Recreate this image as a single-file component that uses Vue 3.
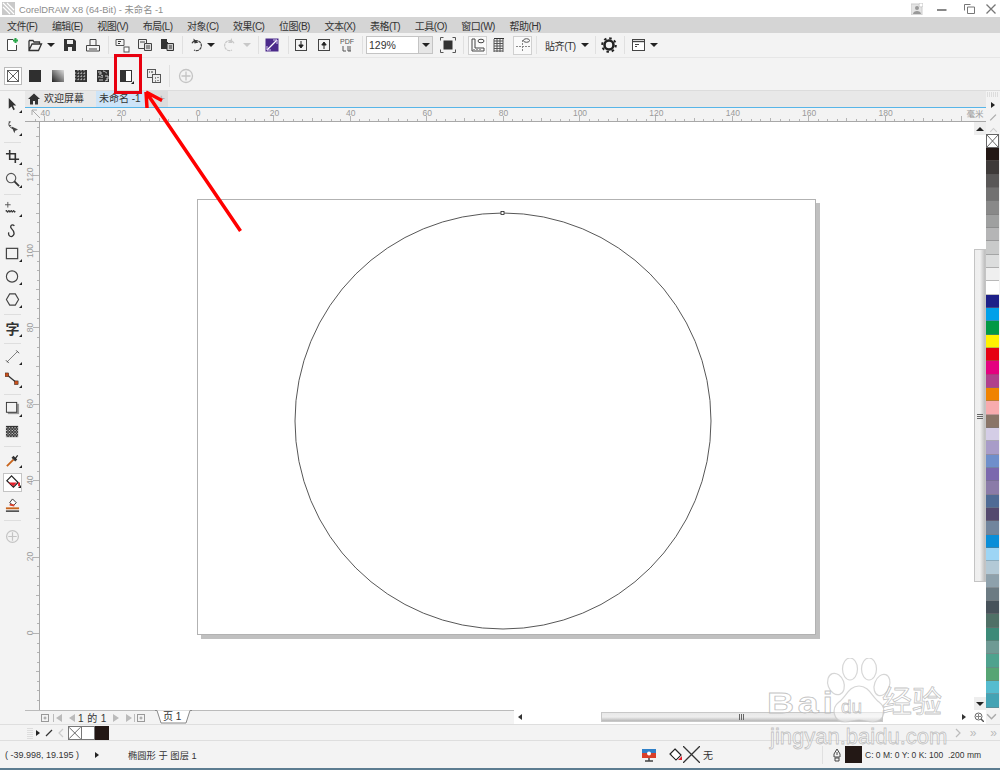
<template>
  <div class="app">
    <!-- title bar -->
    <div class="titlebar">
      <svg class="logo" viewBox="0 0 13 13"><rect width="13" height="13" fill="#c9c9c9" /><path d="M1 1l11 11M5 1l7 7M1 5l7 7" stroke="#fff" stroke-width="1.2" /></svg>
      <span class="title">CorelDRAW X8 (64-Bit) - 未命名 -1</span>
      <div class="winbtns">
        <svg class="user" viewBox="0 0 12 12"><rect width="11" height="11" y="1" fill="#e4e4e4" stroke="#ccc" /><circle cx="6" cy="5" r="2" fill="#999" /><path d="M2 11c0-4 8-4 8 0z" fill="#999" /><circle cx="10" cy="2" r="2" fill="#fff" stroke="#bbb" stroke-width=".6" /></svg>
        <svg class="minb" viewBox="0 0 10 10"><path d="M0 5h9.5" stroke="#888" stroke-width="2" /></svg>
        <svg class="resb" viewBox="0 0 11 10"><path d="M.5 6.5v-6h6M3.500 3h7v6.500h-7z" fill="none" stroke="#777" /></svg>
        <svg class="closeb" viewBox="0 0 10 10"><path d="M.5.500l9 9M9.500.500l-9 9" stroke="#777" stroke-width="1.300" /></svg>
      </div>
    </div>

    <!-- menu -->
    <nav class="menubar">
      <span v-for="m in menus" :key="m">{{ m }}</span>
    </nav>

    <!-- standard toolbar -->
    <div class="toolbar">
      <button class="b"><svg viewBox="0 0 16 16"><path d="M9 2.500H3.500v11h9V8" fill="#fff" stroke="#444" /><path d="M9 3.500h5M11.500 1v5" stroke="#2aa84a" stroke-width="2" /></svg></button>
      <button class="b m1"><svg viewBox="0 0 16 16"><path d="M2 3.500h4l1 1.500h5.500v2M2 3.500v10h9.500L14.500 7H5l-3 6.500" fill="none" stroke="#333" stroke-width="1.300" /></svg></button>
      <i class="ar" />
      <button class="b m3"><svg viewBox="0 0 16 16"><path d="M2 2h10l2 2v10H2z" fill="#333" /><rect x="5" y="3" width="6" height="4" fill="#eee" /><rect x="6" y="10" width="4" height="4" fill="#eee" /></svg></button>
      <button class="b m1"><svg viewBox="0 0 16 16"><path d="M5 8V2.500h6V8M1.500 14V8.500h13V14z" fill="none" stroke="#444" /><path d="M4 12h8" stroke="#444" /></svg></button>
      <i class="sep m4" />
      <button class="b m2"><svg viewBox="0 0 16 16"><path d="M2 2.500h8v6H2z" fill="none" stroke="#555" /><path d="M4 4.500h3M4 6.500h2" stroke="#333" /><rect x="10" y="10" width="5" height="5" fill="#fff" stroke="#555" /></svg></button>
      <button class="b m1"><svg viewBox="0 0 16 16"><path d="M1.500 2.500h8v9h-8z" fill="#eee" stroke="#444" /><path d="M7.500 6.500h7v7h-7z" fill="#ddd" stroke="#444" /><path d="M3 5h5M9 9h4M9 11h4" stroke="#444" /></svg></button>
      <button class="b"><svg viewBox="0 0 16 16"><path d="M2 2h6v3h1v7H2z" fill="#333" /><path d="M8 6.500h6.500v7H8z" fill="#ccc" stroke="#333" /><path d="M10 9h3M10 11h3" stroke="#333" /></svg></button>
      <i class="sep m4" />
      <button class="b m2"><svg viewBox="0 0 16 16"><path d="M4 6.200A5 5 0 1 1 6 13" fill="none" stroke="#444" stroke-width="1.200" stroke-dasharray="3 .6" /><path d="M6 1v5h4z" fill="#333" transform="rotate(-15 8 4)" /></svg></button>
      <i class="ar n1" />
      <button class="b m3 dim"><svg viewBox="0 0 16 16"><path d="M12 6.200A5 5 0 1 0 10 13" fill="none" stroke="#c8c8c8" stroke-width="1.200" stroke-dasharray="3 .6" /><path d="M10 1v5H6z" fill="#c8c8c8" /></svg></button>
      <i class="ar m1 light" />
      <i class="sep m6" />
      <button class="b m2"><svg viewBox="0 0 16 16"><rect x="1.500" y="1.500" width="13" height="13" fill="#4b2a8a" /><path d="M3 13L13 3" stroke="#fff" stroke-width="1.200" /><path d="M9 3h4v4M7 13H3V9" fill="none" stroke="#d9c7f2" /></svg></button>
      <i class="sep m5" />
      <button class="b m1"><svg viewBox="0 0 16 16"><rect x="2.500" y="2.500" width="11" height="11" fill="none" stroke="#444" /><path d="M8 4v6M5.800 8L8 11l2.200-3z" stroke="#222" fill="#222" /></svg></button>
      <button class="b m1"><svg viewBox="0 0 16 16"><rect x="2.500" y="2.500" width="11" height="11" fill="none" stroke="#444" /><path d="M8 12V6M5.800 8L8 5l2.200 3z" stroke="#222" fill="#222" /></svg></button>
      <button class="b m1 pdf"><span>PDF</span><svg viewBox="0 0 12 7"><path d="M2 1v5h3M7 1v5M9 1v5M7 6h3" fill="none" stroke="#555" /></svg></button>
      <i class="sep m4" />
      <div class="combo m3"><span class="combo-val">129%</span><span class="combo-btn"><i class="ar-in" /></span></div>
      <button class="b m4"><svg viewBox="0 0 16 16"><rect x="3.500" y="3.500" width="9" height="9" fill="#333" /><path d="M.5 3.500v-3h3M12.500.5h3v3M15.500 12.500v3h-3M3.500 15.500h-3v-3" fill="none" stroke="#555" /></svg></button>
      <i class="sep m4" />
      <button class="b m4 boxed"><svg viewBox="0 0 16 16"><path d="M2 2v12h12v-3H5V2z" fill="none" stroke="#444" /><path d="M4 13v-1M7 13v-1M10 13v-1" stroke="#444" /><ellipse cx="11" cy="4" rx="3" ry="1.800" fill="none" stroke="#444" /></svg></button>
      <button class="b m1"><svg viewBox="0 0 16 16"><path d="M3 2v13M6 2v13M9 2v13M12 2v13M3 4h9M3 6.500h9M3 9h9M3 11.500h9M3 14h9" stroke="#555" /><path d="M3 1.500h10" stroke="#333" /></svg></button>
      <button class="b m3 boxed"><svg viewBox="0 0 16 16"><path d="M7.500 3v12M1 9.500h14" stroke="#888" stroke-dasharray="2 1" /><ellipse cx="11.500" cy="3.500" rx="3" ry="1.800" fill="none" stroke="#555" /></svg></button>
      <i class="sep m4" />
      <span class="snap">貼齐(T)</span>
      <i class="ar m3" />
      <i class="sep m5" />
      <button class="b m2"><svg viewBox="0 0 16 16"><circle cx="8" cy="8" r="4.500" fill="none" stroke="#222" stroke-width="2.600" /><circle cx="8" cy="8" r="6.800" fill="none" stroke="#222" stroke-width="2" stroke-dasharray="2.500 2.840" /></svg></button>
      <i class="sep m4" />
      <button class="b m3"><svg viewBox="0 0 16 16"><rect x="1.500" y="2.500" width="12" height="11" fill="#fff" stroke="#444" /><path d="M1.500 4.500h12" stroke="#444" stroke-width="1.400" /><path d="M4 7.500h4M4 9.500h2" stroke="#444" /></svg></button>
      <i class="ar n1" />
    </div>

    <!-- fill property bar -->
    <div class="propbar">
      <button class="fillbox"><svg viewBox="0 0 13 13"><rect x=".5" y=".5" width="12" height="12" fill="#fff" stroke="#555" /><path d="M.5.500l12 12M12.500.500l-12 12" stroke="#555" /></svg></button>
      <button class="b p1"><svg viewBox="0 0 16 16"><rect x="2" y="2" width="12" height="12" fill="#2f2f2f" /></svg></button>
      <button class="b p2"><svg viewBox="0 0 16 16"><defs><linearGradient id="grad" x1="0" y1="1" x2="1" y2="0"><stop offset="0" stop-color="#222" /><stop offset="1" stop-color="#ddd" /></linearGradient></defs><rect x="2" y="2" width="12" height="12" fill="url(#grad)" /></svg></button>
      <button class="b p2"><svg viewBox="0 0 16 16"><rect x="2" y="2" width="12" height="12" fill="#333" /><path d="M2 5h12M2 8h12M2 11h12M5 2v12M8 2v12M11 2v12" stroke="#ddd" stroke-width=".9" stroke-dasharray="1.200 1.800" /></svg></button>
      <button class="b"><svg viewBox="0 0 16 16"><rect x="2" y="2" width="12" height="12" fill="#333" /><path d="M3 4h3v2H4M8 3c2 0 3 2 4 2M3 9c2-1 3 1 5 0M10 8h3v3h-2M4 12h4M10 13l3-1M6 7l2 1" fill="none" stroke="#ccc" /></svg></button>
      <button class="b p2 half"><svg viewBox="0 0 16 16"><rect x="2.500" y="2.500" width="11" height="11" fill="#fff" stroke="#333" /><rect x="2" y="2" width="6" height="12" fill="#333" /><path d="M16 13v3h-3z" fill="#222" /></svg></button>
      <button class="b p3"><svg viewBox="0 0 16 16"><rect x="1.500" y="1.500" width="8" height="8" fill="#eee" stroke="#555" /><rect x="6.500" y="6.500" width="8" height="8" fill="#eee" stroke="#555" /><path d="M3 4h1M6 3v2M9 10h1M12 9v1M9 13h1M12 12v1" stroke="#333" /></svg></button>
      <i class="sep tall p4" />
      <button class="b p5"><svg viewBox="0 0 16 16"><circle cx="8" cy="8" r="6.500" fill="none" stroke="#c4c4c4" stroke-width="1.300" /><path d="M8 3.500v9M3.500 8h9" stroke="#c4c4c4" stroke-width="1.300" /></svg></button>
    </div>

    <!-- main area -->
    <div class="work">
      <aside class="toolbox">
        <button class="t"><svg viewBox="0 0 16 16"><path d="M4 1l8 8H8.500l2 4-1.500 1-2-4L4 12.500z" fill="#333" /></svg><i class="fly" /></button>
        <button class="t"><svg viewBox="0 0 16 16"><path d="M5 2c-2 3 0 5 1 6l6 3" fill="none" stroke="#333" /><path d="M4 2h2M4.500 6h2" stroke="#333" /><path d="M7 7l3 7 1-3 3-1z" fill="#444" /></svg><i class="fly" /></button>
        <hr class="ts" />
        <button class="t"><svg viewBox="0 0 16 16"><path d="M5 1v10h10M1 5h10v10" fill="none" stroke="#333" stroke-width="1.700" /></svg><i class="fly" /></button>
        <button class="t"><svg viewBox="0 0 16 16"><circle cx="6.500" cy="6.500" r="5" fill="none" stroke="#555" stroke-width="1.200" /><path d="M10 10l5 5" stroke="#333" stroke-width="2" /></svg><i class="fly" /></button>
        <hr class="ts" />
        <button class="t"><svg viewBox="0 0 16 16"><path d="M3 1v6M0 4h6" stroke="#555" /><path d="M1 11c1-3 1 3 2.500 0s1 3 2.500 0 1 3 2.500 0 1 3 2.500 0" fill="none" stroke="#333" stroke-width="1.200" /></svg><i class="fly" /></button>
        <button class="t"><svg viewBox="0 0 16 16"><path d="M10 3c-3-3-5 1-3 3s4 4 2 7-6 1-5-3" fill="none" stroke="#333" stroke-width="1.400" /></svg></button>
        <button class="t"><svg viewBox="0 0 16 16"><rect x="1.500" y="2.500" width="12" height="11" fill="none" stroke="#444" stroke-width="1.300" /></svg><i class="fly" /></button>
        <button class="t"><svg viewBox="0 0 16 16"><circle cx="7.500" cy="8" r="6" fill="none" stroke="#444" stroke-width="1.200" /></svg><i class="fly" /></button>
        <button class="t"><svg viewBox="0 0 16 16"><path d="M5 2h6l3.500 6L11 14H5L1.500 8z" fill="none" stroke="#444" stroke-width="1.200" /></svg><i class="fly" /></button>
        <hr class="ts" />
        <button class="t zi">字<i class="fly" /></button>
        <hr class="ts" />
        <button class="t"><svg viewBox="0 0 16 16"><path d="M2 14L13 3" stroke="#777" /><path d="M1 12l3 3M12 1.500l3 3" stroke="#444" /></svg><i class="fly" /></button>
        <button class="t"><svg viewBox="0 0 16 16"><path d="M2 3l11 9" stroke="#333" stroke-width="1.400" /><rect x="0" y="1" width="4" height="4" fill="#c8501c" stroke="#222" stroke-width=".5" /><rect x="10" y="9.500" width="4" height="4" fill="#c8501c" stroke="#222" stroke-width=".5" /></svg><i class="fly" /></button>
        <hr class="ts" />
        <button class="t"><svg viewBox="0 0 16 16"><rect x="3" y="3" width="12" height="11" fill="#999" /><rect x="1.500" y="1.500" width="11" height="10.500" fill="#f3f3f3" stroke="#333" /></svg><i class="fly" /></button>
        <button class="t"><svg viewBox="0 0 16 16"><rect x="1" y="2" width="13" height="12" fill="#333" /><path d="M1 4h13M1 7h13M1 10h13M1 13h13" stroke="#ddd" stroke-dasharray="1.500 1.500" /><path d="M2.500 5.500h12M2.500 8.500h12M2.500 11.500h12" stroke="#bbb" stroke-dasharray="1.500 1.500" /></svg></button>
        <hr class="ts" />
        <button class="t"><svg viewBox="0 0 16 16"><path d="M2 14l7-7" stroke="#c8641c" stroke-width="2" /><path d="M8 4l4 4" stroke="#333" stroke-width="3" /><path d="M10 6l3-4 1 1-3 4z" fill="#222" /></svg><i class="fly" /></button>
        <button class="t on"><svg viewBox="0 0 16 16"><path d="M7 1l7 7-5 5-7-7z" fill="#fff" stroke="#222" stroke-width="1.300" /><path d="M3.500 8h9L9 12z" fill="#e4202c" /><path d="M15 8v4" stroke="#e4202c" stroke-width="2" /></svg><i class="fly" /></button>
        <button class="t"><svg viewBox="0 0 16 16"><path d="M8 1l4 4-3 3-4-3z" fill="#fff" stroke="#333" /><path d="M5 7l5 1" stroke="#d8402a" stroke-width="2" /><path d="M1 10h14v2H1z" fill="#c8641c" /><path d="M1 14h14" stroke="#333" stroke-width="1.500" /></svg></button>
        <hr class="ts" />
        <button class="t last"><svg viewBox="0 0 16 16"><circle cx="8" cy="8" r="6.300" fill="none" stroke="#c4c4c4" stroke-width="1.300" /><path d="M8 3.500v9M3.500 8h9" stroke="#c4c4c4" stroke-width="1.300" /></svg></button>
      </aside>

      <div class="center">
        <div class="tabs">
          <svg class="home" viewBox="0 0 12 12"><path d="M6 .5L0 6h2v5.500h3V8h2v3.500h3V6h2z" fill="#333" /></svg>
          <span class="tab">欢迎屏幕</span>
          <span class="tab active">未命名 -1</span>
          <span class="tab-add">+</span>
        </div>

        <div class="hruler">
          <svg width="961" height="13">
            <path d="M7 2l8 8M7 2v5M7 2h5" fill="none" stroke="#aaa" />
            <path v-for="t in hTicks" :key="t.x" :d="`M${t.x} 13v-${t.h}`" stroke="#b4b4b4" />
            <text v-for="l in hLabels" :key="l.x" :x="l.x" y="8" class="rtxt" text-anchor="middle">{{ l.n }}</text>
            <text x="950" y="9" class="rtxt" text-anchor="middle">毫米</text>
          </svg>
        </div>

        <div class="body">
          <div class="vruler">
            <svg width="14" height="588">
              <path v-for="t in vTicks" :key="t.y" :d="`M14 ${t.y}h-${t.h}`" stroke="#b4b4b4" />
              <text v-for="l in vLabels" :key="l.y" class="rtxt" text-anchor="middle" :transform="`translate(8 ${l.y}) rotate(-90)`">{{ l.n }}</text>
            </svg>
          </div>
          <div class="canvas">
            <!-- the drawing page, placed on the free canvas -->
            <div class="page">
              <svg class="shape" width="420" height="420" viewBox="0 0 420 420">
                <circle cx="210" cy="210" r="208" fill="none" stroke="#444" stroke-width=".9" />
                <rect x="208" y="0.500" width="3" height="3" fill="#fff" stroke="#222" stroke-width=".8" />
              </svg>
            </div>
            <div class="vscroll">
              <div class="sb-btn up"><i class="tri-up" /></div>
              <div class="sb-track">
                <div class="sb-thumb"><span class="grip" /></div>
              </div>
              <div class="sb-btn down"><i class="ar-in" /></div>
            </div>
          </div>
        </div>

        <div class="pagebar">
          <div class="pagenav">
            <svg class="pg first" viewBox="0 0 10 10"><rect x="1.500" y="1.500" width="7" height="7" fill="none" stroke="#999" /><path d="M3.500 5h3M5 3.500v3" stroke="#999" /></svg>
            <i class="nav-l bar" />
            <i class="nav-l" />
            <span class="count">1 的 1</span>
            <i class="nav-r" />
            <i class="nav-r bar" />
            <svg class="pg" viewBox="0 0 10 10"><rect x="1.500" y="1.500" width="7" height="7" fill="none" stroke="#999" /><path d="M3.500 5h3M5 3.500v3" stroke="#999" /></svg>
            <div class="pagetab">
              <svg width="37" height="14" viewBox="0 0 37 14"><path d="M0 .5h2l4 12.500h25l4-12.500h2" fill="#fff" stroke="#888" /></svg>
              <span>页 1</span>
            </div>
          </div>
          <div class="hscroll">
            <i class="nav-l dark" />
            <div class="hthumb"><span class="grip h" /></div>
            <i class="nav-r dark" />
            <svg class="zoomfit" viewBox="0 0 10 10"><circle cx="4.500" cy="4.500" r="3.500" fill="#fff" stroke="#666" /><path d="M7 7l3 3" stroke="#555" stroke-width="1.400" /><path d="M4.500 2v5M2 4.500h5" stroke="#888" /></svg>
          </div>
        </div>
      </div>

      <aside class="palette">
        <div class="pal-head">
          <span class="pal-grip" />
          <i class="tri-r" />
          <svg viewBox="0 0 10 10"><path d="M1 9l7-7" stroke="#aaa" stroke-width="1.500" /></svg>
          <svg viewBox="0 0 10 10"><path d="M1 7l4-4 4 4" fill="none" stroke="#ccc" stroke-width="1.300" /></svg>
        </div>
        <div class="swatch none"><svg viewBox="0 0 13 13" preserveAspectRatio="none"><path d="M0 0l13 13M13 0L0 13" stroke="#555" /></svg></div>
        <div v-for="c in palette" :key="c" class="swatch" :style="{ background: c }" />
        <svg class="pal-down" viewBox="0 0 10 10"><path d="M1 3l4 4 4-4" fill="none" stroke="#aaa" stroke-width="1.300" /></svg>
      </aside>
    </div>

    <!-- document palette -->
    <div class="docpal">
      <span class="dp-grip" />
      <i class="tri-r" />
      <svg class="dp-pen" viewBox="0 0 8 8"><path d="M1 7l6-6" stroke="#333" stroke-width="1.300" /></svg>
      <svg class="dp-lt" viewBox="0 0 8 10"><path d="M6 1L2 5l4 4" fill="none" stroke="#ccc" stroke-width="1.200" /></svg>
      <div class="dp-sw x"><svg viewBox="0 0 13 13"><path d="M0 0l13 13M13 0L0 13" stroke="#555" /></svg></div>
      <div class="dp-sw w" />
      <div class="dp-sw k" />
      <svg class="dp-more" viewBox="0 0 8 10"><path d="M2 1l4 4-4 4" fill="none" stroke="#bbb" stroke-width="1.200" /></svg>
      <span class="dp-dbl">»</span>
      <span class="dp-dbl last">»</span>
    </div>

    <!-- status bar -->
    <footer class="status">
      <span class="coords">( -39.998, 19.195 )</span>
      <i class="tri-r st" />
      <span class="obj">椭圆形 于 图层 1</span>
      <svg class="mon" viewBox="0 0 14 14"><rect y="1" width="14" height="9" fill="#2f80c8" /><rect y="5" width="14" height="5" fill="#d8402a" /><circle cx="7" cy="5.500" r="2" fill="#fff" /><path d="M3 13h8M7 10v3" stroke="#444" stroke-width="1.500" /></svg>
      <svg class="fillst" viewBox="0 0 14 14"><path d="M6 1l6 6-5 5-6-6z" fill="#fff" stroke="#222" stroke-width="1.200" /><path d="M3 7h8l-4 4z" fill="#fff" /><path d="M13 8v4H9z" fill="#e4202c" /></svg>
      <div class="xbox"><svg viewBox="0 0 17 17"><path d="M0 0l17 17M17 0L0 17" stroke="#333" stroke-width="1.300" /></svg></div>
      <span class="none-txt">无</span>
      <i class="sep st-sep" />
      <svg class="nib" viewBox="0 0 8 14"><path d="M4 1L1 6v3h6V6zM2 10h4v3H2z" fill="none" stroke="#444" /><path d="M4 4v3" stroke="#444" /></svg>
      <div class="outline" />
      <span class="cmyk">C: 0 M: 0 Y: 0 K: 100&nbsp; .200 mm</span>
    </footer>
    <div class="strip" />

    <!-- red annotation drawn over the screenshot -->
    <svg class="note" width="1000" height="770">
      <rect x="115.500" y="55.500" width="25" height="37" fill="none" stroke="#e8000f" stroke-width="3" />
      <path d="M240.500 231L146 92M146 92l16 8.500M146 92l1 16" fill="none" stroke="#f00" stroke-width="3.500" />
    </svg>

    <!-- watermark -->
    <div class="mark">
      <svg class="paw" width="76" height="76" viewBox="0 0 76 76">
        <g fill="none" stroke="#c8c8c8" stroke-opacity=".75" stroke-width="1.200">
          <ellipse cx="17" cy="26" rx="8" ry="11" transform="rotate(-20 17 26)" />
          <ellipse cx="31" cy="11" rx="7.500" ry="11" />
          <ellipse cx="50" cy="11" rx="7.500" ry="11" />
          <ellipse cx="63" cy="27" rx="7.500" ry="11" transform="rotate(20 63 27)" />
          <path d="M40 28c10 0 13 11 20 16 8 6 6 20-6 20-6 0-9-2-14-2s-8 2-14 2c-12 0-14-14-6-20 7-5 10-16 20-16z" fill="#fff" fill-opacity=".5" />
        </g>
      </svg>
      <span class="bai">Bai</span>
      <span class="du">du</span>
      <span class="jy">经验</span>
      <span class="url">jingyan.baidu.com</span>
    </div>
  </div>
</template>

<script setup>
const menus = ['文件(F)', '编辑(E)', '视图(V)', '布局(L)', '对象(C)', '效果(C)', '位图(B)', '文本(X)', '表格(T)', '工具(O)', '窗口(W)', '帮助(H)']

const palette = [
  '#231815', '#3e3a39', '#595757', '#727171', '#898989', '#9fa0a0', '#b5b5b6', '#c9caca', '#dcdddd', '#efefef', '#ffffff',
  '#1d2088', '#00a0e9', '#009944', '#fff100', '#e60012', '#e4007f', '#b0408c', '#f08300', '#f7abae', '#8a7568',
  '#d4cde6', '#a89cc8', '#6f8fcb', '#7b68ae', '#8a7ba8', '#4f6b95', '#54496e', '#71859d', '#0a8ed8', '#9dd5f5',
  '#b3c9d6', '#8ea1ac', '#6c7b83', '#47525a', '#4f7066', '#3d8a78', '#6f9a94', '#4fa28e', '#57a574', '#55bccf', '#44a3b4',
]

// 20 units are 76.4px on screen, with eight small divisions in between
const unit = 76.4
const step = unit / 8

const hZero = 172
const hTicks = []
for (let i = -18; i < 100; i++) {
  const x = Math.round(hZero + i * step) + 0.5
  if (x < 8 || x > 945) continue
  hTicks.push({ x, h: i % 8 === 0 ? 5 : i % 4 === 0 ? 3 : 2 })
}
const hLabels = [-40, -20, 0, 20, 40, 60, 80, 100, 120, 140, 160, 180].map((n) => ({
  n: Math.abs(n),
  x: hZero + 1 + (n / 20) * unit,
}))

// vertical ruler: 0 sits 511px below the top of the canvas
const vZero = 511
const vTicks = []
for (let i = -56; i < 10; i++) {
  const y = Math.round(vZero + i * step) + 0.5
  if (y < 2 || y > 587) continue
  vTicks.push({ y, h: i % 8 === 0 ? 6 : i % 4 === 0 ? 3 : 2 })
}
const vLabels = [120, 100, 80, 60, 40, 20, 0].map((n) => ({
  n,
  y: vZero - (n / 20) * unit,
}))
</script>

<style>
html, body { margin: 0; background: #fff; }
</style>

<style scoped>
.app {
  position: relative;
  width: 1000px;
  height: 770px;
  overflow: hidden;
  display: flex;
  flex-direction: column;
  font-family: "Liberation Sans", "Noto Sans CJK SC", sans-serif;
  font-size: 10px;
  color: #333;
  background: #f3f3f3;
}
button {
  padding: 0;
  border: 0;
  background: none;
  font: inherit;
  color: inherit;
}
svg { display: block; }

.titlebar {
  height: 17px;
  flex: none;
  background: #fff;
  display: flex;
  align-items: center;
  padding-left: 2px;
}
.logo { width: 13px; height: 13px; }
.title { margin-left: 4px; font-size: 9.300px; color: #8c8c8c; white-space: nowrap; }
.winbtns { margin-left: auto; display: flex; align-items: center; }
.user { width: 12px; height: 12px; }
.minb { width: 10px; height: 10px; margin-left: 14px; margin-top: 2px; }
.resb { width: 11px; height: 10px; margin-left: 17px; }
.closeb { width: 10px; height: 10px; margin-left: 11px; margin-right: 4px; }

.menubar {
  height: 16px;
  flex: none;
  background: #d5d5d5;
  display: flex;
  align-items: center;
  gap: 14.600px;
  padding-left: 7px;
  color: #333;
  white-space: nowrap;
  letter-spacing: -.5px;
}

.toolbar {
  height: 25px;
  flex: none;
  box-sizing: border-box;
  display: flex;
  align-items: center;
  padding-left: 1px;
  border-bottom: 1px solid #e6e6e6;
  background: #f3f3f3;
}
.b {
  width: 22px;
  height: 20px;
  flex: none;
  display: flex;
  align-items: center;
  justify-content: center;
  box-sizing: border-box;
}
.b svg { width: 16px; height: 16px; }
.ar {
  width: 10px;
  flex: none;
  display: block;
  height: 0;
  position: relative;
}
.ar::after {
  content: "";
  position: absolute;
  left: 1px;
  top: -2px;
  border-left: 4px solid transparent;
  border-right: 4px solid transparent;
  border-top: 4px solid #222;
}
.ar.light::after { border-top-color: #c8c8c8; }
.ar-in {
  display: block;
  border-left: 4px solid transparent;
  border-right: 4px solid transparent;
  border-top: 4px solid #222;
}
.sep { width: 1px; height: 18px; flex: none; background: #e0e0e0; display: block; }
.m1 { margin-left: 1px; }
.m2 { margin-left: 2px; }
.m3 { margin-left: 3px; }
.m4 { margin-left: 4px; }
.m5 { margin-left: 5px; }
.m6 { margin-left: 6px; }
.n1 { margin-left: -1px; }
.boxed { width: 19px; border: 1px solid #d0d0d0; background: #fafafa; height: 19px; }
.pdf { flex-direction: column; line-height: 7px; font-size: 7px; color: #555; }
.pdf svg { width: 12px; height: 7px; }
.combo {
  width: 67px;
  height: 18px;
  flex: none;
  display: flex;
  box-sizing: border-box;
  border: 1px solid #c4c4c4;
  background: #fff;
}
.combo-val { flex: 1; padding-left: 2px; line-height: 16px; font-size: 10.500px; color: #333; }
.combo-btn {
  width: 13px;
  display: flex;
  align-items: center;
  justify-content: center;
  background: #e6e6e6;
  border-left: 1px solid #c4c4c4;
}
.snap { margin-left: 8px; width: 32px; flex: none; white-space: nowrap; letter-spacing: -.4px; }

.propbar {
  height: 33px;
  flex: none;
  display: flex;
  align-items: center;
  padding: 3px 0 0 4px;
  box-sizing: border-box;
  border-bottom: 1px solid #dcdcdc;
  background: #f3f3f3;
}
.fillbox {
  width: 18px;
  height: 18px;
  flex: none;
  padding: 2px;
  box-sizing: border-box;
  border: 1px solid #bbb;
  background: #fff;
}
.p1 { margin-left: 2px; }
.p2 { margin-left: 1px; }
.p3 { margin-left: 6px; }
.p4 { margin-left: 4px; height: 22px; }
.p5 { margin-left: 5px; }
.half { position: relative; }

.work {
  flex: 1;
  min-height: 0;
  display: flex;
}
.toolbox {
  width: 25px;
  flex: none;
  display: flex;
  flex-direction: column;
  align-items: center;
  padding-top: 2.600px;
  box-sizing: border-box;
}
.t {
  position: relative;
  width: 19px;
  height: 22.800px;
  flex: none;
  display: flex;
  align-items: center;
  justify-content: center;
  box-sizing: border-box;
}
.t svg { width: 15px; height: 15px; }
.fly {
  position: absolute;
  right: 0;
  bottom: 3px;
  border-left: 3px solid transparent;
  border-bottom: 3px solid #222;
}
.t.on { border: 1px solid #c4c4c4; background: #fff; height: 19px; margin: 2px 0 1.800px; }
.t.last { margin-top: 2px; }
.zi { font-size: 14px; font-weight: 700; color: #333; }
.ts {
  width: 17px;
  height: 1px;
  flex: none;
  margin: 3.200px 0 1.800px;
  border: 0;
  background: #dedede;
}

.center {
  flex: 1;
  min-width: 0;
  display: flex;
  flex-direction: column;
}
.tabs {
  height: 17px;
  flex: none;
  box-sizing: border-box;
  display: flex;
  align-items: center;
  background: #e8e8e8;
  border-bottom: 1px solid #57b5e8;
}
.home { width: 12px; height: 12px; margin-left: 3px; }
.tab { margin-left: 3px; padding-left: 1px; line-height: 16px; width: 51px; box-sizing: border-box; flex: none; white-space: nowrap; }
.tab.active { margin-left: 2px; background: #cde4f8; padding-left: 3px; width: 49px; }
.tab-add { width: 23px; line-height: 16px; background: #dcdcdc; text-align: right; padding-right: 3px; box-sizing: border-box; color: #aaa; font-size: 13px; }

.hruler {
  height: 14px;
  flex: none;
  box-sizing: border-box;
  border-bottom: 1px solid #a8a8a8;
  background: #f3f3f3;
}
.rtxt { font-size: 8.500px; fill: #9a9a9a; font-family: "Liberation Sans", "Noto Sans CJK SC", sans-serif; }

.body { flex: 1; min-height: 0; display: flex; }
.vruler {
  width: 14px;
  flex: none;
  box-sizing: content-box;
  border-right: 1px solid #a8a8a8;
  background: #f3f3f3;
}
.canvas {
  position: relative;
  flex: 1;
  min-width: 0;
  background: #fff;
  display: flex;
  justify-content: flex-end;
}
.page {
  position: absolute;
  left: 157px;
  top: 77px;
  width: 617px;
  height: 434px;
  border: 1px solid #b2b2b2;
  background: #fff;
  box-shadow: 4px 4px 0 #c0c0c0;
}
.shape { position: absolute; left: 95px; top: 11px; }
.vscroll {
  position: relative;
  width: 12px;
  display: flex;
  flex-direction: column;
}
.sb-btn {
  height: 13px;
  flex: none;
  display: flex;
  align-items: center;
  justify-content: center;
  background: #eee;
}
.tri-up {
  display: block;
  border-left: 4px solid transparent;
  border-right: 4px solid transparent;
  border-bottom: 4px solid #222;
}
.sb-track { flex: 1; padding-top: 114px; }
.sb-thumb {
  height: 333px;
  box-sizing: border-box;
  border: 1px solid #c4c4c4;
  background: linear-gradient(90deg, #eeeeee, #f0f0f0 50%, #bdbdbd);
  display: flex;
  align-items: center;
  justify-content: center;
}
.grip {
  width: 6px;
  height: 6px;
  background: repeating-linear-gradient(0deg, #666 0 1px, transparent 1px 2px);
}
.grip.h {
  background: repeating-linear-gradient(90deg, #666 0 1px, transparent 1px 2px);
}

.pagebar {
  height: 14px;
  flex: none;
  display: flex;
  background: #fff;
}
.pagenav {
  width: 489px;
  flex: none;
  display: flex;
  align-items: center;
  background: #f3f3f3;
  border-top: 1px solid #bbb;
  box-sizing: border-box;
  padding-left: 15px;
}
.pg { width: 10px; height: 10px; flex: none; }
.first { margin-right: 6px; }
.nav-l, .nav-r {
  display: block;
  flex: none;
  width: 0;
  height: 0;
  border-top: 4px solid transparent;
  border-bottom: 4px solid transparent;
}
.nav-l { border-right: 6px solid #bbb; margin-right: 3px; }
.nav-l.bar { margin-right: 7px; }
.nav-r { border-left: 6px solid #bbb; margin-right: 7px; }
.nav-l.bar { box-shadow: -2px 0 0 0 #f3f3f3, -3px 0 0 0 #bbb; }
.nav-r.bar { box-shadow: 2px 0 0 0 #f3f3f3, 3px 0 0 0 #bbb; margin-right: 4px; }
.count { width: 35px; flex: none; letter-spacing: .4px; color: #333; white-space: nowrap; }
.pagetab { position: relative; margin-left: 9px; width: 37px; flex: none; height: 14px; margin-top: -1px; }
.pagetab span { position: absolute; left: 8px; top: 0; line-height: 13px; white-space: nowrap; }
.hscroll {
  flex: 1;
  min-width: 0;
  display: flex;
  align-items: center;
  padding-left: 4px;
  position: relative;
  background: #fff;
}
.nav-l.dark { border-right-color: #333; border-top-width: 3px; border-bottom-width: 3px; border-right-width: 4px; margin-right: 0; }
.nav-r.dark { border-left-color: #333; border-top-width: 3px; border-bottom-width: 3px; border-left-width: 4px; margin: 0 0 0 auto; }
.hthumb {
  margin-left: 79px;
  width: 282px;
  height: 10px;
  background: linear-gradient(180deg, #e8e8e8, #eee 50%, #b8b8b8);
  border: 1px solid #c8c8c8;
  display: flex;
  align-items: center;
  justify-content: center;
  box-sizing: border-box;
}
.zoomfit { width: 10px; height: 10px; margin: 0 2px 0 8px; }

.palette {
  width: 14px;
  flex: none;
  display: flex;
  flex-direction: column;
  background: #f3f3f3;
  box-sizing: border-box;
  position: relative;
}
.pal-head {
  height: 43px;
  flex: none;
  display: flex;
  flex-direction: column;
  align-items: center;
  gap: 5px;
}
.pal-head svg { width: 9px; height: 9px; }
.pal-grip {
  width: 12px;
  height: 5px;
  margin-top: 1px;
  background: repeating-linear-gradient(90deg, #ddd 0 1px, transparent 1px 2px);
}
.tri-r {
  display: block;
  flex: none;
  border-top: 3.500px solid transparent;
  border-bottom: 3.500px solid transparent;
  border-left: 4px solid #222;
}
.swatch {
  width: 13px;
  height: 13.330px;
  flex: none;
  box-sizing: border-box;
  border-bottom: 1px solid rgba(120, 120, 120, .45);
}
.swatch.none {
  height: 14px;
  background: #fff;
  border: 1px solid #666;
}
.swatch.none svg { width: 100%; height: 100%; }
.pal-down { width: 11px; height: 11px; margin-top: 3px; }

.docpal {
  height: 16px;
  flex: none;
  display: flex;
  align-items: center;
  box-sizing: border-box;
  border-top: 1px solid #dedede;
  padding-left: 27px;
}
.dp-grip {
  width: 6px;
  height: 12px;
  background: repeating-linear-gradient(0deg, #ddd 0 1px, transparent 1px 2px);
}
.docpal .tri-r { margin-left: 3px; }
.dp-pen { width: 8px; height: 8px; margin-left: 5px; }
.dp-lt { width: 8px; height: 10px; margin-left: 4px; }
.dp-sw { width: 13.500px; height: 14px; flex: none; box-sizing: border-box; border: 1px solid #777; }
.dp-sw.x { margin-left: 3px; background: #fff; }
.dp-sw.x svg { width: 100%; height: 100%; }
.dp-sw.w { background: #fff; border-left: 0; }
.dp-sw.k { background: #231815; border-color: #231815; }
.dp-more { width: 8px; height: 10px; margin-left: auto; margin-right: 8px; }
.dp-dbl { color: #bbb; font-size: 12px; line-height: 12px; margin-right: 14px; }
.dp-dbl.last { margin-right: 3px; }

.status {
  height: 28px;
  flex: none;
  display: flex;
  align-items: center;
  box-sizing: border-box;
  border-top: 1px solid #dedede;
  padding-left: 5px;
  white-space: nowrap;
}
.coords { width: 86px; flex: none; font-size: 9px; }
.tri-r.st { margin-left: 4px; }
.obj { margin-left: 29px; width: 514px; flex: none; font-size: 9.300px; }
.mon { width: 14px; height: 14px; flex: none; }
.fillst { width: 14px; height: 14px; flex: none; margin-left: 13px; }
.xbox { width: 17px; height: 17px; flex: none; margin-left: 0; }
.none-txt { margin-left: 3px; width: 12px; flex: none; }
.st-sep { margin-left: 107px; height: 18px; }
.nib { width: 8px; height: 14px; flex: none; margin-left: 10px; }
.outline { width: 17px; height: 17px; flex: none; margin-left: 4px; background: #231815; }
.cmyk { margin-left: 3px; font-size: 8.500px; }
.strip { height: 2px; flex: none; background: #5c7c90; }

.note { position: absolute; left: 0; top: 0; pointer-events: none; }

.mark {
  position: absolute;
  left: 0;
  top: 0;
  width: 1000px;
  height: 770px;
  pointer-events: none;
  font-family: "Liberation Sans", "Noto Sans CJK SC", sans-serif;
}
.paw { position: absolute; left: 819px; top: 658px; }
.mark span {
  position: absolute;
  color: rgba(255, 255, 255, .55);
  -webkit-text-stroke: .8px rgba(170, 170, 170, .7);
  white-space: nowrap;
}
.bai { left: 767px; top: 685px; font-size: 30px; font-weight: 700; letter-spacing: 3px; line-height: 36px; transform: scaleX(1.25); transform-origin: left center; }
.du { left: 841px; top: 696px; font-size: 19px; line-height: 22px; }
.jy { left: 882px; top: 685px; font-size: 30px; line-height: 34px; }
.url { left: 770px; top: 724px; font-size: 22px; line-height: 26px; }
</style>
